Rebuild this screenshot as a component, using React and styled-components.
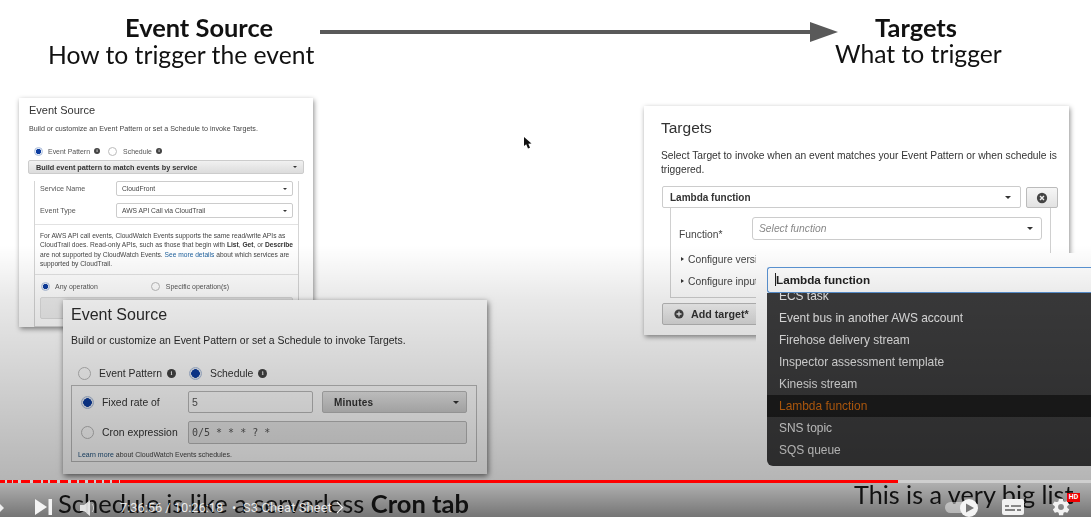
import React from 'react';
import styled, { createGlobalStyle } from 'styled-components';

const Global = createGlobalStyle`
  html, body { margin: 0; padding: 0; background: #fff; }
  body { width: 1091px; height: 517px; overflow: hidden; font-family: "Liberation Sans", Arial, sans-serif; }
`;

const Frame = styled.div`
  position: relative;
  width: 1091px;
  height: 517px;
  overflow: hidden;
  background: #fff;
`;
const Slide = styled.div`
  position: absolute;
  inset: 0;
  filter: blur(0.45px);
`;
const Header = styled.header`
  display: flex;
  align-items: flex-start;
  padding: 13px 0 0 48px;
  font-family: Lato, "Open Sans", sans-serif;
  color: #111;
`;
const HeadBlock = styled.div`
  width: ${p => p.$w}px;
  text-align: center;
  flex: none;
`;
const HeadTitle = styled.div`
  font-size: 25.4px;
  font-weight: 700;
  line-height: 28px;
  padding-left: ${p => p.$pad || 0}px;
`;
const HeadSub = styled.div`
  font-size: 24.7px;
  line-height: ${p => p.$lh}px;
  white-space: nowrap;
`;
const FlowArrow = styled.svg`
  flex: none;
  margin: 8px -3px 0 6px;
`;

const Card = styled.section`
  position: absolute;
  left: ${p => p.$x}px;
  top: ${p => p.$y}px;
  width: ${p => p.$w}px;
  height: ${p => p.$h}px;
  box-sizing: border-box;
  background: #fff;
  overflow: hidden;
  box-shadow: 1px 2px 5px rgba(0,0,0,.45);
  color: #333;
`;

/* small pattern card */
const SmallCard = styled(Card)`padding: 5px 9px 0 10px;`;
const SmallTitle = styled.h3`
  margin: 0; font-weight: 400; font-size: 11px; line-height: 14px; color: #333;
`;
const SmallDesc = styled.p`
  margin: 6px 0 0; font-size: 7.15px; line-height: 12px; white-space: nowrap; color: #444;
`;
const RadioRow = styled.div`
  display: flex; align-items: center; height: ${p => p.$h || 14}px;
  margin: ${p => p.$m || '0'};
  font-size: ${p => p.$fs || 6.95}px;
  color: ${p => p.$c || '#555'};
  white-space: nowrap;
`;
const Radio = styled.span`
  flex: none;
  box-sizing: border-box;
  width: ${p => p.$s}px; height: ${p => p.$s}px;
  border-radius: 50%;
  margin: ${p => p.$m || '0'};
  border: 1px solid ${p => p.$on ? '#aebfdc' : '#bbb'};
  background: ${p => p.$on ? 'radial-gradient(circle, #0d3da0 0 52%, #e8edf6 58%)' : 'transparent'};
`;
const Info = styled.span`
  flex: none;
  display: inline-flex; align-items: center; justify-content: center;
  width: ${p => p.$s}px; height: ${p => p.$s}px;
  border-radius: 50%;
  margin: ${p => p.$m || '0'};
  background: #444; color: #eee;
  font: 700 ${p => p.$s - 2}px/1 "Liberation Serif", serif;
`;
const BarSelect = styled.div`
  display: flex; align-items: center; justify-content: space-between;
  box-sizing: border-box;
  width: 276px; height: 14px; margin: 2px 0 0 -1px; padding: 0 6px 0 7px;
  background: linear-gradient(#f1f1f1, #dcdcdc);
  border: 1px solid #ccc; border-radius: 2px;
  font-size: 7.3px; font-weight: 700; color: #333;
`;
const Caret = styled.i`
  flex: none;
  width: 0; height: 0;
  border-left: ${p => p.$s}px solid transparent;
  border-right: ${p => p.$s}px solid transparent;
  border-top: ${p => p.$s}px solid #333;
`;
const SubBox = styled.div`
  box-sizing: border-box;
  width: 265px; height: 146px; margin-left: 5px;
  border: 1px solid #d5d5d5; border-top: 0;
`;
const FieldRow = styled.div`
  display: flex; align-items: center;
  margin: ${p => p.$m};
  padding: 0 5px;
`;
const SmallLabel = styled.label`
  width: 76px; flex: none; font-size: 7.2px; color: #555;
`;
const SmallField = styled.div`
  box-sizing: border-box;
  display: flex; align-items: center; justify-content: space-between;
  width: 177px; height: 15px; padding: 0 5px;
  border: 1px solid #ccc; border-radius: 2px;
  font-size: 6.7px; color: #444;
`;
const SmallNote = styled.p`
  margin: 6px 0 0; padding: 6px 5px 5px;
  border-top: 1px solid #e2e2e2; border-bottom: 1px solid #e2e2e2;
  font-size: 6.65px; line-height: 9.4px; color: #444;
  white-space: nowrap;
  b { color: #333; }
  a { color: #1c5f9c; }
`;
const GhostBtn = styled.div`
  height: 20px; margin: 3px 5px 0; background: #eee; border: 1px solid #ddd; border-radius: 2px;
`;

/* big schedule card */
const BigCard = styled(Card)`
  padding: 5px 10px 0 8px;
  box-shadow: 1px 2px 6px rgba(0,0,0,.6);
  color: #2c2c2c;
`;
const BigTitle = styled.h3`
  margin: 0; font-weight: 400; font-size: 16px; line-height: 19px; color: #2b2b2b;
`;
const BigDesc = styled.p`
  margin: 10px 0 0; font-size: 10.45px; line-height: 14px; white-space: nowrap;
`;
const OuterBox = styled.div`
  box-sizing: border-box;
  height: 77px; margin-top: 4px; padding: 5px 9px 0 9px;
  border: 1px solid #bdbdbd;
`;
const BigRow = styled.div`
  display: flex; align-items: center; gap: 9px; height: ${p => p.$h}px; margin-top: ${p => p.$mt || 0}px;
  font-size: 10.4px; color: #333; white-space: nowrap;
`;
const BigLabel = styled.span`
  width: 86px; flex: none; margin-left: -1px; margin-right: -9px;
`;
const InputBox = styled.div`
  box-sizing: border-box; display: flex; align-items: center; flex: none;
  width: ${p => p.$w}px; height: ${p => p.$h}px; padding: 0 3px;
  border: 1px solid #bbb; border-radius: 2px;
  background: ${p => p.$bg || 'transparent'};
  font: ${p => p.$mono ? '10px "DejaVu Sans Mono", monospace' : '10.5px "Liberation Sans", sans-serif'};
  color: #555;
`;
const MinutesBtn = styled.div`
  box-sizing: border-box; display: flex; align-items: center; justify-content: space-between; flex: none;
  width: 145px; height: 22px; padding: 0 7px 0 11px;
  border: 1px solid #bbb; border-radius: 2px;
  background: linear-gradient(#e8e8e8, #cdcdcd);
  font-size: 10px; font-weight: 700; letter-spacing: .2px; color: #333;
`;
const LearnMore = styled.p`
  margin: 6px 0 0 -3px; font-size: 7px; line-height: 9px; color: #444;
  a { color: #1c4f7c; }
`;

/* targets */
const TargetCard = styled(Card)`
  padding: 13px 0 0 17px;
  color: #333;
`;
const TargetTitle = styled.h3`
  margin: 0; font-weight: 400; font-size: 15.5px; line-height: 18px; color: #333;
`;
const TargetDesc = styled.p`
  margin: 12px 0 0; width: 400px; font-size: 10.25px; line-height: 14px; color: #333;
`;
const TargetRow = styled.div`
  display: flex; gap: 5px; margin: 9px 0 0 1px;
`;
const TargetSelect = styled.div`
  box-sizing: border-box; display: flex; align-items: center; justify-content: space-between;
  width: 359px; height: 22px; padding: 0 9px 0 7px;
  border: 1px solid #ccc; border-radius: 2px;
  font-size: 10px; font-weight: 700; color: #333;
`;
const IconBtn = styled.div`
  box-sizing: border-box; display: flex; align-items: center; justify-content: center;
  width: 32px; height: 21px; margin-top: 1px;
  border: 1px solid #bbb; border-radius: 2px;
  background: linear-gradient(#f6f6f6, #e2e2e2);
`;
const TargetSub = styled.div`
  box-sizing: border-box;
  width: 381px; height: 90px; margin-left: 9px;
  padding: 9px 8px 0 8px;
  border: 1px solid #d0d0d0; border-top: 0;
  font-size: 10.3px; color: #444;
`;
const FunctionRow = styled.div`display: flex; align-items: flex-end; gap: 0;`;
const FunctionLabel = styled.span`width: 73px; flex: none; line-height: 12px; margin-bottom: -1px;`;
const FunctionSelect = styled.div`
  box-sizing: border-box; display: flex; align-items: center; justify-content: space-between;
  width: 290px; height: 23px; padding: 0 8px 0 6px;
  border: 1px solid #ccc; border-radius: 3px;
  font-style: italic; color: #888;
`;
const Disclosure = styled.div`
  display: flex; align-items: center; gap: 4px; height: 14px; margin: ${p => p.$mt}px 0 0 2px;
  white-space: nowrap;
  &::before {
    content: ""; width: 0; height: 0;
    border-top: 2.5px solid transparent; border-bottom: 2.5px solid transparent; border-left: 3px solid #333;
  }
`;
const AddBtn = styled.div`
  box-sizing: border-box; display: flex; align-items: center; gap: 7px;
  width: 120px; height: 22px; margin: 5px 0 0 1px; padding-left: 11px;
  border: 1px solid #bbb; border-radius: 2px;
  background: linear-gradient(#f4f4f4, #dedede);
  font-size: 10.7px; font-weight: 700; color: #333;
`;

/* dropdown crop */
const DropCrop = styled.div`
  position: absolute; left: 756px; top: 253px; right: 0; bottom: 0;
  background: #fff;
  padding: 14px 0 0 11px;
`;
const DropInput = styled.div`
  box-sizing: border-box; height: 26px; padding: 0 0 2px 8px;
  display: flex; align-items: center;
  border: 1px solid #5b95d6; border-right: 0; border-radius: 3px 0 0 3px;
  background: #fff; color: #222;
  font-size: 11.7px; font-weight: 700;
  span { border-left: 1px solid #222; height: 13px; margin-left: -1px; }
`;
const DropList = styled.ul`
  list-style: none; margin: 0; padding: 0;
  height: 173px; overflow: hidden;
  background: #3d3d3e;
  border-radius: 0 0 0 6px;
`;
const DropItem = styled.li`
  box-sizing: border-box; height: 22px; line-height: 22px; padding-left: 12px;
  margin-top: ${p => p.$first ? -8 : 0}px;
  font-size: 11.95px;
  background: ${p => p.$active ? '#1e1e1e' : 'transparent'};
  color: ${p => p.$active ? '#d56c10' : '#ececec'};
`;

const Cursor = styled.svg`
  position: absolute; left: 523px; top: 136px;
`;

const Shade = styled.div`
  position: absolute; inset: 0; pointer-events: none;
  background: linear-gradient(to bottom,
    rgba(0,0,0,0) 0, rgba(0,0,0,0) 245px,
    rgba(0,0,0,.09) 300px,
    rgba(0,0,0,.29) 480px,
    rgba(0,0,0,.54) 517px);
`;

/* player */
const Progress = styled.div`
  position: absolute; left: 0; right: 0; top: 480px; height: 3px;
  display: flex; background: #cfcfcf;
`;
const Played = styled.div`
  width: 898px; height: 100%;
  background: linear-gradient(to right, transparent 0 120px, #f00 120px);
  position: relative;
`;
const Chapter = styled.span`
  position: absolute; top: 0; height: 100%;
  left: ${p => p.$x}px; width: ${p => p.$w}px; background: #f00;
`;
const Caption = styled.div`
  position: absolute; left: ${p => p.$x}px; top: ${p => p.$y}px;
  font: 400 ${p => p.$fs}px/28px Lato, sans-serif; color: #111; white-space: nowrap;
  filter: blur(.3px);
  b { font-weight: 700; }
`;
const Controls = styled.div`
  position: absolute; left: 0; right: 0; bottom: 0; height: 33px;
  color: #fff;
`;
const Ctl = styled.svg`
  position: absolute; left: ${p => p.$x}px; top: ${p => p.$y}px;
`;
const TimeText = styled.span`
  position: absolute; left: ${p => p.$x}px; top: 16px;
  font: 400 12.8px/16px Roboto, sans-serif; color: rgba(255,255,255,.85); white-space: nowrap;
  letter-spacing: ${p => p.$ls || 0}px;
`;
const HdBadge = styled.span`
  position: absolute; left: 1067px; top: 9px;
  width: 13px; height: 9px; background: #e00; color: #fff;
  font: 700 7px/9px Roboto, sans-serif; text-align: center;
`;

const chapters = [[0,5],[7,5],[13,5],[21,5],[26,4],[33,8],[43,5],[50,7],[60,8],[71,6],[79,6],[88,6],[96,6],[104,6],[112,7]];

const CloseGlyph = () => (
  <svg width="12" height="12" viewBox="0 0 11 11"><circle cx="5.5" cy="5.5" r="4.7" fill="#444"/><path d="M3.7 3.7l3.6 3.6M7.3 3.7l-3.6 3.6" stroke="#eee" strokeWidth="1.3"/></svg>
);
const PlusGlyph = () => (
  <svg width="10" height="10" viewBox="0 0 10 10"><circle cx="5" cy="5" r="4.6" fill="#444"/><path d="M5 2.5v5M2.5 5h5" stroke="#eee" strokeWidth="1.3"/></svg>
);

export default function App() {
  return (
    <Frame>
      <Global />
      <Slide>
        <Header>
          <HeadBlock $w={266}>
            <HeadTitle $pad={36}>Event Source</HeadTitle>
            <HeadSub $lh={28}>How to trigger the event</HeadSub>
          </HeadBlock>
          <FlowArrow width="518" height="22" viewBox="0 0 518 22">
            <path d="M0 11H492" stroke="#595959" strokeWidth="4" />
            <path d="M490 1l28 10-28 10z" fill="#595959" />
          </FlowArrow>
          <HeadBlock $w={162}>
            <HeadTitle>Targets</HeadTitle>
            <HeadSub $lh={25}>What to trigger</HeadSub>
          </HeadBlock>
        </Header>

        <SmallCard $x={19} $y={98} $w={294} $h={229}>
          <SmallTitle>Event Source</SmallTitle>
          <SmallDesc>Build or customize an Event Pattern or set a Schedule to invoke Targets.</SmallDesc>
          <RadioRow $m="9px 0 0 5px">
            <Radio $s={9} $on $m="0 5px 0 0" />Event Pattern<Info $s={6} $m="0 0 0 4px">i</Info>
            <Radio $s={9} $m="0 6px 0 8px" />Schedule<Info $s={6} $m="0 0 0 4px">i</Info>
          </RadioRow>
          <BarSelect>Build event pattern to match events by service<Caret $s={2} /></BarSelect>
          <SubBox>
            <FieldRow $m="7px 0 0">
              <SmallLabel>Service Name</SmallLabel>
              <SmallField>CloudFront<Caret $s={2} /></SmallField>
            </FieldRow>
            <FieldRow $m="7px 0 0">
              <SmallLabel>Event Type</SmallLabel>
              <SmallField>AWS API Call via CloudTrail<Caret $s={2} /></SmallField>
            </FieldRow>
            <SmallNote>
              For AWS API call events, CloudWatch Events supports the same read/write APIs as<br />
              CloudTrail does. Read-only APIs, such as those that begin with <b>List</b>, <b>Get</b>, or <b>Describe</b><br />
              are not supported by CloudWatch Events. <a>See more details</a> about which services are<br />
              supported by CloudTrail.
            </SmallNote>
            <RadioRow $m="5px 0 0 6px">
              <Radio $s={9} $on $m="0 5px 0 0" />Any operation
              <Radio $s={9} $m="0 6px 0 53px" />Specific operation(s)
            </RadioRow>
            <GhostBtn />
          </SubBox>
        </SmallCard>

        <TargetCard $x={644} $y={106} $w={425} $h={229}>
          <TargetTitle>Targets</TargetTitle>
          <TargetDesc>Select Target to invoke when an event matches your Event Pattern or when schedule is triggered.</TargetDesc>
          <TargetRow>
            <TargetSelect>Lambda function<Caret $s={3} /></TargetSelect>
            <IconBtn><CloseGlyph /></IconBtn>
          </TargetRow>
          <TargetSub>
            <FunctionRow>
              <FunctionLabel>Function*</FunctionLabel>
              <FunctionSelect>Select function<Caret $s={3} /></FunctionSelect>
            </FunctionRow>
            <Disclosure $mt={12}>Configure version/alias</Disclosure>
            <Disclosure $mt={8}>Configure input</Disclosure>
          </TargetSub>
          <AddBtn><PlusGlyph />Add target*</AddBtn>
        </TargetCard>

        <BigCard $x={63} $y={300} $w={424} $h={174}>
          <BigTitle>Event Source</BigTitle>
          <BigDesc>Build or customize an Event Pattern or set a Schedule to invoke Targets.</BigDesc>
          <RadioRow $h={16} $fs={10.4} $c="#333" $m="17px 0 0 7px">
            <Radio $s={13} $m="0 8px 0 0" />Event Pattern<Info $s={9} $m="0 0 0 5px">i</Info>
            <Radio $s={13} $on $m="0 8px 0 13px" />Schedule<Info $s={9} $m="0 0 0 5px">i</Info>
          </RadioRow>
          <OuterBox>
            <BigRow $h={22}>
              <Radio $s={13} $on />
              <BigLabel>Fixed rate of</BigLabel>
              <InputBox $w={125} $h={22}>5</InputBox>
              <MinutesBtn>Minutes<Caret $s={3} /></MinutesBtn>
            </BigRow>
            <BigRow $h={23} $mt={8}>
              <Radio $s={13} />
              <BigLabel>Cron expression</BigLabel>
              <InputBox $w={279} $h={23} $bg="rgba(0,0,0,.08)" $mono>0/5 * * * ? *</InputBox>
            </BigRow>
            <LearnMore><a>Learn more</a> about CloudWatch Events schedules.</LearnMore>
          </OuterBox>
        </BigCard>

        <DropCrop>
          <DropInput><span />Lambda function</DropInput>
          <DropList>
            <DropItem $first>ECS task</DropItem>
            <DropItem>Event bus in another AWS account</DropItem>
            <DropItem>Firehose delivery stream</DropItem>
            <DropItem>Inspector assessment template</DropItem>
            <DropItem>Kinesis stream</DropItem>
            <DropItem $active>Lambda function</DropItem>
            <DropItem>SNS topic</DropItem>
            <DropItem>SQS queue</DropItem>
          </DropList>
        </DropCrop>

        <Cursor width="10" height="14" viewBox="0 0 10 14">
          <path d="M1 1l0 9 2.2-1.8L5 12.5l2-.8-1.7-4 3.2-.2z" fill="#111" />
        </Cursor>
      </Slide>

      <Shade />

      <Progress>
        <Played>
          {chapters.map(([x, w]) => <Chapter key={x} $x={x} $w={w} />)}
        </Played>
      </Progress>

      <Caption $x={58} $y={489} $fs={25.5}>Schedule is like a serverless <b>Cron tab</b></Caption>
      <Caption $x={854} $y={480} $fs={25.2}>This is a very big list</Caption>

      <Controls>
        <Ctl $x={0} $y={20} width="4" height="8" viewBox="0 0 4 8"><path d="M0 0l4 4-4 4z" fill="#eee" /></Ctl>
        <Ctl $x={35} $y={14} width="17" height="18" viewBox="0 0 17 18"><path d="M0 1l12 8-12 8zM13.500 1H17v16h-3.500z" fill="#f4f4f4" /></Ctl>
        <Ctl $x={80} $y={15} width="14" height="18" viewBox="0 0 14 18"><path d="M0 6h4l6-5v16l-6-5H0z" fill="#eee" fillOpacity=".9" /><path d="M12 5c2 2 2 6 0 8" stroke="#eee" strokeOpacity=".7" fill="none" /></Ctl>
        <TimeText $x={120}>7:36:56 / 10:26:18</TimeText>
        <TimeText $x={232}>•</TimeText>
        <TimeText $x={243} $ls={0.15}>S3 Cheat Sheet</TimeText>
        <Ctl $x={336} $y={17} width="8" height="13" viewBox="0 0 8 13"><path d="M1 1l5.500 5.500L1 12" fill="none" stroke="#f2f2f2" strokeWidth="1.300" /></Ctl>
        <Ctl $x={945} $y={14} width="34" height="20" viewBox="0 0 34 20">
          <rect x="0" y="4" width="26" height="11" rx="5.5" fill="#fff" fillOpacity=".45" />
          <circle cx="24" cy="10" r="9" fill="#f4f4f4" />
          <path d="M21 5.500l8 4.500-8 4.500z" fill="#777" />
        </Ctl>
        <Ctl $x={1002} $y={14} width="22" height="18" viewBox="0 0 22 18">
          <path fillRule="evenodd" d="M2 1h18a2 2 0 0 1 2 2v12a2 2 0 0 1-2 2H2a2 2 0 0 1-2-2V3a2 2 0 0 1 2-2zM3 7v2h4V7zM9 7v2h10V7zM3 11v2h10v-2zM15 11v2h4v-2z" fill="#f2f2f2" />
        </Ctl>
        <Ctl $x={1051} $y={13} width="20" height="20" viewBox="0 0 24 24">
          <path fill="#f2f2f2" fillRule="evenodd" d="M19.400 13c.1-.3.1-.7.1-1s0-.7-.1-1l2.100-1.600c.2-.2.2-.4.1-.6l-2-3.500c-.1-.2-.4-.3-.6-.2l-2.500 1c-.5-.4-1.100-.7-1.700-1l-.4-2.600c0-.2-.2-.4-.5-.4h-4c-.3 0-.5.2-.5.400l-.4 2.600c-.6.3-1.200.6-1.700 1l-2.500-1c-.2-.1-.5 0-.6.2l-2 3.500c-.1.2-.1.4.1.6L4.600 11c-.1.300-.1.700-.1 1s0 .7.1 1l-2.100 1.600c-.2.2-.2.400-.1.600l2 3.500c.1.200.4.300.6.200l2.500-1c.5.400 1.100.7 1.700 1l.4 2.600c0 .2.2.4.500.4h4c.3 0 .5-.2.5-.4l.4-2.600c.6-.3 1.200-.6 1.700-1l2.500 1c.2.1.5 0 .6-.2l2-3.500c.1-.2.100-.4-.1-.6zM12 15.500a3.500 3.500 0 1 1 0-7 3.500 3.500 0 0 1 0 7z" />
        </Ctl>
        <HdBadge>HD</HdBadge>
      </Controls>
    </Frame>
  );
}
